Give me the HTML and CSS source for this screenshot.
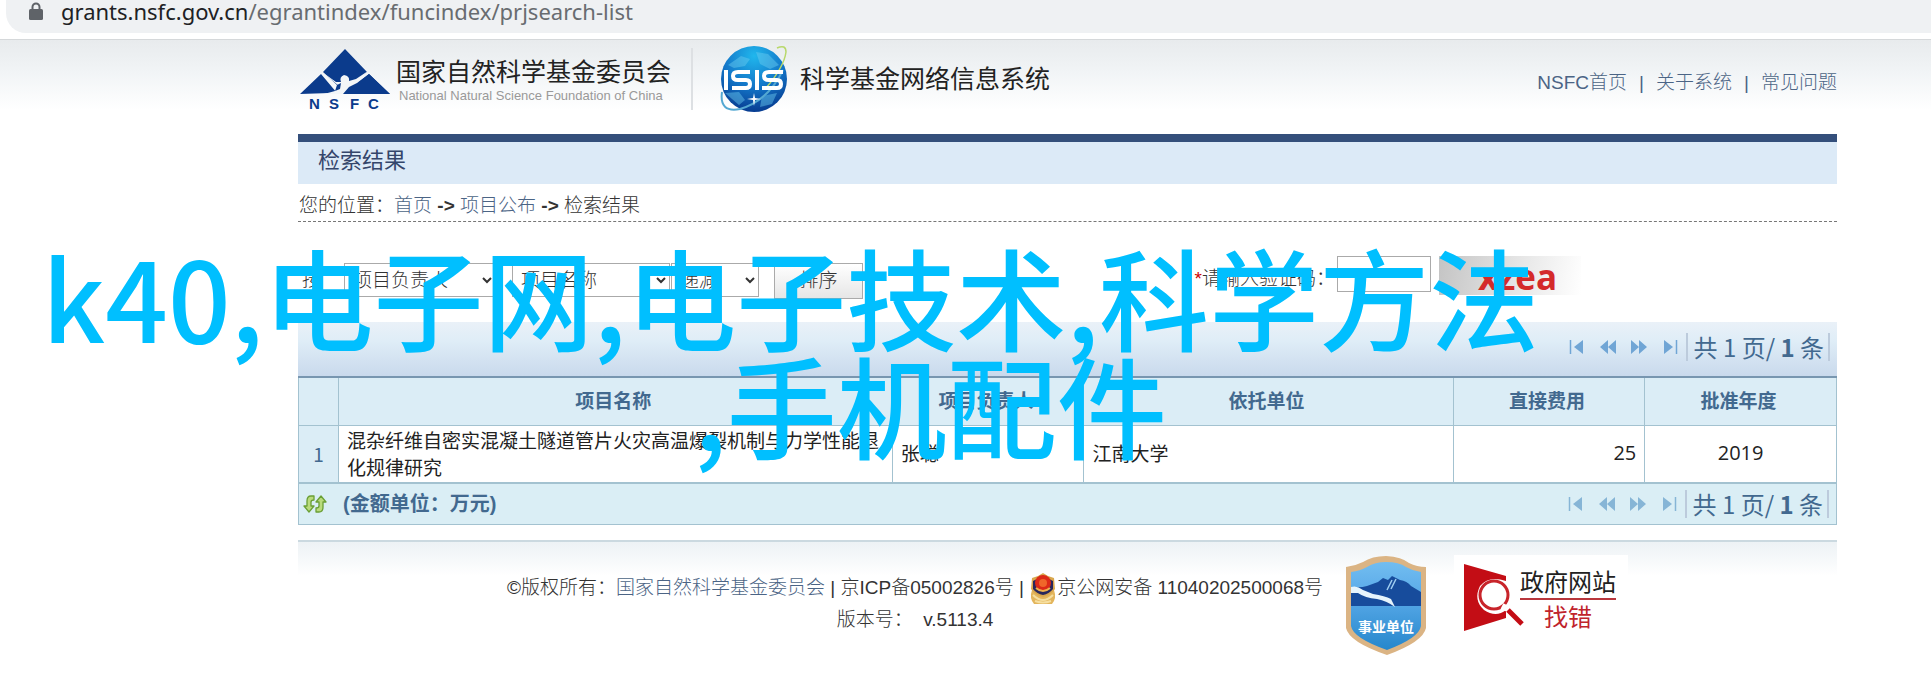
FILE: index.html
```html
<!DOCTYPE html>
<html lang="zh-CN">
<head>
<meta charset="utf-8">
<title>检索结果 - 科学基金网络信息系统</title>
<link rel="stylesheet" href="styles.css">
</head>
<body>
<svg class="defs" aria-hidden="true">
  <symbol id="first" viewBox="0 0 16 16"><path d="M1.500 1v14" stroke="currentColor" stroke-width="1.500"/><path d="M14 1v14L5 8z" fill="currentColor"/></symbol>
  <symbol id="prev" viewBox="0 0 16 16"><path d="M8 1v14L0 8zM16 1v14L8 8z" fill="currentColor"/></symbol>
  <symbol id="next" viewBox="0 0 16 16"><path d="M0 1v14l8-7zM8 1v14l8-7z" fill="currentColor"/></symbol>
  <symbol id="last" viewBox="0 0 16 16"><path d="M2 1v14l9-7z" fill="currentColor"/><path d="M14.500 1v14" stroke="currentColor" stroke-width="1.500"/></symbol>
</svg>

<div class="address">
  <div class="address-field">
    <svg class="lock" viewBox="0 0 14 18"><path d="M3.500 8V5a3.500 3.500 0 0 1 7 0v3" fill="none" stroke="#5f6368" stroke-width="2"/><rect y="7" width="14" height="11" rx="1.500" fill="#5f6368"/></svg>
    <span>grants.nsfc.gov.cn<span class="path">/egrantindex/funcindex/prjsearch-list</span></span>
  </div>
</div>

<div class="page">
  <header class="header">
    <svg class="nsfc" viewBox="0 0 90 62">
      <path d="M45 0 67 23 54 35 51 42H40L37 36 23 23z" fill="#0b3b8c"/>
      <path d="M21 25 37 44 30 44 0 45zM69 25 90 45H43L55 36z" fill="#0b3b8c"/>
      <path d="M22 23 36 33 41 33Q39 28 44 26Q50 27 49 32L56 30 68 22 56 36Q51 41 48 45H24L35 42Q40 39 39 37z" fill="#f3f6f8"/>
      <path d="M37 36 41 34 40 40 35 42zM49 38 57 34 69 25 90 45H43z" fill="#0b3b8c"/>
      <g class="nsfc-text"><text x="9" y="60">N</text><text x="29" y="60">S</text><text x="50" y="60">F</text><text x="68" y="60">C</text></g>
    </svg>
    <div class="org"><div class="org-name">国家自然科学基金委员会</div><div class="org-en">National Natural Science Foundation of China</div></div>
    <div class="rule"></div>
    <svg class="globe" viewBox="0 0 68 68">
      <defs><radialGradient id="g" cx=".5" cy=".15" r=".85"><stop offset="0" stop-color="#20b7ed"/><stop offset=".55" stop-color="#1376c8"/><stop offset="1" stop-color="#073c91"/></radialGradient></defs>
      <circle cx="34" cy="34" r="33" fill="url(#g)"/>
      <path d="M8 20 21 11 30 14 25 21 14 23zM36 7l12 2 11 11-9 4-10-5zM5 48l14-1 6 8-6 5zM42 51l15-3-5 11-12 3z" fill="#6ccdf0" opacity=".45"/>
      <path d="M2 47Q-1 68 20 64Q48 56 63 25" fill="none" stroke="#54a8d2" stroke-width="2"/>
      <path d="M46 43Q64 22 66 7Q66-1 57 3" fill="none" stroke="#b8d86b" stroke-width="1.500"/>
      <g fill="none" stroke="#fff" stroke-width="4"><path d="M6 25v20M30 27H18q-5 0-5 4t5 4h8q4 0 4 4t-4 4H12M37 25v20M63 27H49q-5 0-5 4t5 4h8q4 0 4 4t-4 4H42"/></g>
      <path d="m34 48 1 5 6 1-6 1-1 6-1-6-6-1 6-1z" fill="#fff"/>
    </svg>
    <h1 class="system">科学基金网络信息系统</h1>
    <nav class="nav"><a href="#">NSFC首页</a><span>|</span><a href="#">关于系统</a><span>|</span><a href="#">常见问题</a></nav>
  </header>

  <h2 class="title">检索结果</h2>
  <div class="crumbs">您的位置：<a href="#">首页</a> <b>-&gt;</b> <a href="#">项目公布</a> <b>-&gt;</b> 检索结果</div>

  <form class="filters">
    <label for="by">按</label>
    <select id="by" class="by"><option>项目负责人</option></select>
    <select class="field" aria-label="排序字段"><option>项目名称</option></select>
    <select class="order" aria-label="排序方式"><option>递减</option></select>
    <button type="button">排序</button>
    <div class="verify">
      <label for="code"><i>*</i>请输入验证码：</label>
      <input id="code" type="text">
      <div class="captcha">xzea</div>
    </div>
  </form>

  <section class="grid">
    <div class="bar top">
      <div class="pager">
        <button type="button" aria-label="首页"><svg><use href="#first"/></svg></button>
        <button type="button" aria-label="上一页"><svg><use href="#prev"/></svg></button>
        <button type="button" aria-label="下一页"><svg><use href="#next"/></svg></button>
        <button type="button" aria-label="末页"><svg><use href="#last"/></svg></button>
        <div class="count">共 1 页/ <b>1</b> 条</div>
      </div>
    </div>
    <table>
      <colgroup><col class="c-no"><col class="c-name"><col class="c-num"><col class="c-unit"><col class="c-num"><col class="c-num"></colgroup>
      <thead><tr><th></th><th>项目名称</th><th>项目负责人</th><th>依托单位</th><th>直接费用</th><th>批准年度</th></tr></thead>
      <tbody><tr><td class="no">1</td><td>混杂纤维自密实混凝土隧道管片火灾高温爆裂机制与力学性能退化规律研究</td><td>张聪</td><td>江南大学</td><td class="right">25</td><td class="center">2019</td></tr></tbody>
    </table>
    <div class="bar bottom">
      <button type="button" class="refresh" aria-label="刷新"><svg viewBox="0 0 24 20"><g fill="#b9db7c" stroke="#6a9f35" stroke-width="1.300" stroke-linejoin="round"><path d="M11 2H8Q4 2 4 7v5H1l5 6 5-6H8V8q0-2 3-2z"/><path d="M13 18h3q4 0 4-5V8h3l-5-6-5 6h3v4q0 2-3 2z"/></g></svg></button>
      <strong>(金额单位：万元)</strong>
      <div class="pager">
        <button type="button" aria-label="首页"><svg><use href="#first"/></svg></button>
        <button type="button" aria-label="上一页"><svg><use href="#prev"/></svg></button>
        <button type="button" aria-label="下一页"><svg><use href="#next"/></svg></button>
        <button type="button" aria-label="末页"><svg><use href="#last"/></svg></button>
        <div class="count">共 1 页/ <b>1</b> 条</div>
      </div>
    </div>
  </section>

  <footer class="footer">
    <div class="legal">
      <div class="legal-line">©版权所有：<a href="#">国家自然科学基金委员会</a>&nbsp;| 京ICP备05002826号 |&nbsp;<svg class="police" viewBox="0 0 28 32"><path d="M3 17Q0 25 5 31H23Q28 25 25 17z" fill="#e3b55c"/><path d="M4 22q5 5 10 5t10-5M6 28q8 3 16 0" stroke="#f6dfa0" stroke-width="2" fill="none"/><path d="M14 0 19 3 25 5 26 16Q22 22 14 24Q6 22 2 16L3 5 9 3z" fill="#d9a74d"/><path d="M14 3 24 8v8q-4 5-10 6Q8 21 4 16V8z" fill="#28275c"/><ellipse cx="14" cy="10" rx="8" ry="8" fill="#dc2918"/><circle cx="14" cy="10" r="4" fill="#f0662a"/><path d="M7 15q7 6 14 0" stroke="#efb14d" stroke-width="2" fill="none"/></svg>京公网安备 11040202500068号</div>
      <div class="legal-line">版本号：&nbsp; v.5113.4</div>
    </div>
    <svg class="shield" viewBox="0 0 82 100">
      <defs><linearGradient id="s" x2="0" y2="1"><stop offset="0" stop-color="#72bdf0"/><stop offset=".4" stop-color="#58a9e8"/><stop offset="1" stop-color="#2687cc"/></linearGradient></defs>
      <path d="M41 0Q57 1 64 7Q72 11 81 11V72Q78 86 42 99Q4 86 1 72V11Q10 10 18 6Q27 0 41 0z" fill="#dbb484"/>
      <path d="M41 6Q54 6 61 11Q68 15 76 16V70Q74 82 42 94Q8 82 6 70V16Q15 15 22 11Q30 6 41 6z" fill="url(#s)"/>
      <path d="M6 31Q16 32 22 30L33 26 38 22 43 24 47 20 55 24Q62 25 66 30L76 36V50H6z" fill="#174c9c"/>
      <path d="M6 31Q12 29 18 34L28 38Q40 40 46 43L50 51Q42 45 32 43Q20 42 13 37L6 37z" fill="#e6f4fc"/>
      <path d="M42 34 47 24M46 33 51 23" stroke="#9fcdf0" stroke-width="1.500"/>
      <text x="41" y="76">事业单位</text>
    </svg>
    <div class="report">
      <svg viewBox="0 0 60 68"><path d="M0 0 42 12V17Q25 11 16 22Q9 36 20 46Q32 54 42 46V54L0 67z" fill="#c30d15"/><circle cx="30" cy="31" r="14" fill="#fff" stroke="#c8242a" stroke-width="3"/><path d="M38 42 44 45" stroke="#fff" stroke-width="6"/><path d="M44 46 58 60" stroke="#c30d15" stroke-width="5"/></svg>
      <div class="report-text"><div>政府网站</div><div class="red">找错</div></div>
    </div>
  </footer>
</div>

<div class="caption"><div>k40,电子网,电子技术,科学方法</div><div class="second">,手机配件</div></div>
</body>
</html>
```
FILE: styles.css
```css
* { box-sizing: border-box; }
body {
  margin: 0;
  position: relative;
  background: #fff;
  color: #333;
  font: 300 19px/28px "Liberation Sans", "Noto Sans CJK SC", sans-serif;
  overflow-x: hidden;
}
a { color: #4b6485; text-decoration: none; }
b, strong { font-weight: 700; }
button { font: inherit; }
.defs { display: block; width: 0; height: 0; }

.address { padding: 0 0 6px 6px; border-bottom: 1px solid #d5d8da; }
.address-field {
  display: flex;
  gap: 18px;
  height: 33px;
  padding: 0 0 12px 23px;
  align-items: center;
  border-radius: 0 0 0 20px;
  background: #eff1f3;
  color: #202124;
  font: 22px/20px "Noto Sans", sans-serif;
}
.lock { width: 14px; height: 18px; }
.path { color: #686c70; }

.page {
  padding: 0 94px 0 298px;
  background: linear-gradient(#e8ebed, #f1f4f6 32px, #fff 70px) no-repeat;
}
.header { display: flex; height: 94px; align-items: flex-start; }
.nsfc { width: 90px; height: 62px; margin: 9px 6px 0 2px; overflow: visible; }
.nsfc-text { fill: #0b3b8c; font: bold 15px "Liberation Sans", sans-serif; }
.org { padding-top: 15px; white-space: nowrap; }
.org-name { font: 25px/30px "Noto Sans CJK SC", sans-serif; color: #222; }
.org-en { padding-left: 3px; font: 13px/22px "Liberation Sans", sans-serif; color: #999; }
.rule { width: 2px; height: 62px; margin: 8px 27px 0 20px; background: #dde0e3; }
.globe { width: 68px; height: 68px; margin-top: 5px; }
.system { margin: 22px 0 0 12px; font: 25px/30px "Noto Sans CJK SC", sans-serif; color: #222; }
.nav { display: flex; gap: 12px; margin: 29px 0 0 auto; color: #4b6485; }

.title {
  margin: 0;
  padding: 0 20px 10px;
  border-top: 8px solid #344f7b;
  background: #dceaf7;
  color: #34466b;
  font: 22px/32px "Noto Sans CJK SC", sans-serif;
}
.crumbs { padding: 8px 0 1px 1px; border-bottom: 1px dashed #777; }

.filters { display: flex; height: 100px; padding-top: 34px; align-items: flex-start; }
.filters > * { margin-top: 7px; }
.filters label { line-height: 34px; padding-left: 4px; }
.filters select {
  height: 34px;
  border: 1px solid #aaa;
  border-radius: 0;
  background-color: #fff;
  color: #333;
  font: inherit;
  padding: 0 7px 0 4px;
}
.filters .by { width: 152px; margin-left: 23px; }
.filters .field { width: 158px; margin-left: 16px; }
.filters .order { width: 88px; margin-left: 1px; }
.filters button {
  width: 89px;
  height: 36px;
  margin-left: 15px;
  padding: 0;
  border: 1px solid #aaa;
  background: linear-gradient(#fff, #e6e6e6);
  color: #333;
}
.filters .verify { display: flex; margin: 0 256px 0 auto; }
.filters .verify label { padding: 6px 0 0; }
.verify i { color: #c00; font-style: normal; }
.verify input { width: 94px; height: 36px; border: 1px solid #aaa; margin-left: 2px; font: inherit; }
.captcha {
  width: 142px;
  height: 39px;
  margin-left: 8px;
  padding-left: 39px;
  background: linear-gradient(100deg, #c4c4c4, #e6e6e6 55%, #fff);
  color: #d42a2a;
  font: bold 35px/42px "Open Sans", sans-serif;
}

.bar { display: flex; align-items: center; color: #42698f; }
.top { height: 56px; padding-bottom: 4px; border-bottom: 2px solid #7896b0; background: linear-gradient(#eaf1f8, #dfedf7 35%, #c9d9ec); }
.bottom { height: 41px; border: 1px solid #a3c2d0; border-top: 0; background: #daeef5; }
.bottom strong { margin-left: 16px; font-size: 20px; }
.pager { display: flex; align-items: center; gap: 15px; margin-left: auto; padding-right: 7px; color: #70a5d5; }
.bottom .pager { color: #86b5d6; }
.pager button, .refresh { display: flex; padding: 0; border: 0; background: none; color: inherit; }
.pager svg { width: 16px; height: 16px; }
.count {
  margin-left: -7px;
  padding: 0 4px 0 6px;
  border: solid #bccbdc;
  border-width: 0 2px;
  color: #42698f;
  font: 24px/28px "Noto Sans CJK SC", sans-serif;
  white-space: nowrap;
}
.refresh { margin-left: 4px; }
.refresh svg { width: 24px; height: 20px; }

table { width: 100%; table-layout: fixed; border-collapse: collapse; color: #222; font-family: "Noto Sans CJK SC", sans-serif; font-weight: 400; }
.c-no { width: 40px; }
.c-name { width: 36%; }
.c-unit { width: 24%; }
th { height: 47px; padding: 0 4px 3px 0; background: #dbedf6; color: #42698f; border: 1px solid #a3c2d0; border-top: 0; }
td { height: 58px; padding: 0 8px 2px; line-height: 27px; border: 1px solid #a3c2d0; border-bottom-width: 2px; background: #fff; }
td.no { background: #dbedf6; color: #42698f; padding: 0; text-align: center; }
.right, .center { font: 20px/27px "Open Sans", sans-serif; }
.right { text-align: right; }
.center { text-align: center; }

.footer {
  display: flex;
  align-items: flex-start;
  margin-top: 15px;
  padding-bottom: 27px;
  border-top: 2px solid #cbd9e0;
  background: linear-gradient(#edf2f5, #fff 34px);
}
.legal { margin: 30px 22px 0 209px; text-align: center; white-space: nowrap; }
.legal-line { height: 32px; line-height: 32px; }
.police { width: 28px; height: 32px; vertical-align: middle; }
.shield { width: 82px; height: 100px; margin-top: 14px; }
.shield text { fill: #fff; font: bold 14px "Noto Sans CJK SC", sans-serif; text-anchor: middle; }
.report { display: flex; margin: 13px 0 0 27px; padding: 9px 12px 8px 10px; background: #fff; }
.report > svg { width: 60px; height: 68px; }
.report-text { margin-left: -4px; color: #222; font: 24px/34px "Noto Sans CJK SC", sans-serif; text-align: center; }
.red { border-top: 2px solid #b8363c; color: #c0242c; line-height: 32px; }

.caption {
  position: absolute;
  top: 241px;
  left: 42px;
  color: #00bfff;
  font: 500 110px/108px "Noto Sans CJK SC", sans-serif;
  white-space: nowrap;
  pointer-events: none;
}
.second { padding-left: 652px; }
```
